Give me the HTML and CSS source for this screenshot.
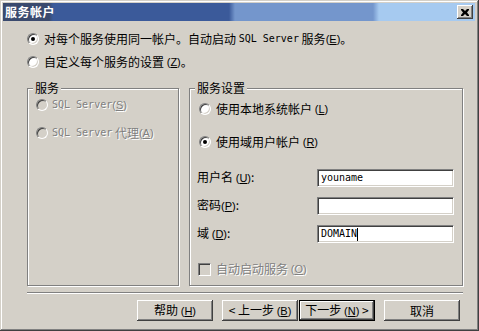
FILE: index.html
```html
<!DOCTYPE html>
<html lang="zh-CN">
<head>
  <meta charset="UTF-8">
  <title>服务帐户</title>
  <link rel="stylesheet" href="styles.css">
</head>
<body>
  <div class="window">
    <div class="titlebar">
      <span class="title">服务帐户</span>
      <span class="close">
        <svg width="8" height="7" viewBox="0 0 8 7"><path d="M0 0h2l2 2 2-2h2v1L6 3.5 8 6v1H6L4 5 2 7H0V6l2-2.5L0 1z" fill="#000"/></svg>
      </span>
    </div>
    <div class="content">
      <div class="opt first"><span class="radio checked"></span>对每个服务使用同一帐户。自动启动 <span class="lat">SQL Server</span> 服务<span class="key">(<u>E</u>)</span>。</div>
      <div class="opt second"><span class="radio"></span>自定义每个服务的设置 <span class="key">(<u>Z</u>)</span>。</div>

      <div class="groups">
        <!-- 服务 -->
        <div class="group services">
          <span class="legend">服务</span>
          <div class="opt disabled"><span class="radio off"></span><span class="lat">SQL Server</span><span class="key">(<u>S</u>)</span></div>
          <div class="opt disabled agent"><span class="radio off"></span><span class="lat">SQL Server</span> 代理<span class="key">(<u>A</u>)</span></div>
        </div>
        <!-- 服务设置 -->
        <div class="group settings">
          <span class="legend">服务设置</span>
          <div class="opt inner"><span class="radio"></span>使用本地系统帐户 <span class="key">(<u>L</u>)</span></div>
          <div class="opt inner domain"><span class="radio checked"></span>使用域用户帐户 <span class="key">(<u>R</u>)</span></div>
          <div class="fields">
            <div class="field"><span class="label">用户名 <span class="key">(<u>U</u>)</span>:</span><span class="input"><span class="lat">youname</span></span></div>
            <div class="field"><span class="label">密码<span class="key">(<u>P</u>)</span>:</span><span class="input"></span></div>
            <div class="field"><span class="label">域 <span class="key">(<u>D</u>)</span>:</span><span class="input"><span class="lat">DOMAIN</span><span class="caret"></span></span></div>
          </div>
          <div class="opt disabled check"><span class="checkbox"></span>自动启动服务 <span class="key">(<u>O</u>)</span></div>
        </div>
      </div>

      <div class="sep"></div>

      <div class="buttons">
        <button class="button">帮助 <span class="key">(<u>H</u>)</span></button>
        <button class="button back">&lt; 上一步 <span class="key">(<u>B</u>)</span></button>
        <button class="button default">下一步 <span class="key">(<u>N</u>)</span> &gt;</button>
        <button class="button cancel">取消</button>
      </div>
    </div>
  </div>
</body>
</html>
```

FILE: styles.css
```css
:root {
  --face: #d4d0c8;
  --shadow: #808080;
  --dark: #404040;
  --light: #fff;
}
* { box-sizing: border-box; }
body {
  margin: 0;
  background: var(--face);
  font-family: "Noto Sans CJK SC", "Noto Sans", sans-serif;
  font-size: 12px;
  line-height: 16px;
  color: #000;
}
u { text-decoration: underline; }
.lat {
  font-family: "DejaVu Sans Mono", monospace;
  font-size: 10px;
}
.key {
  font-family: "Liberation Sans", sans-serif;
  font-size: 11px;
  white-space: pre;
}
.window {
  width: 479px;
  height: 331px;
  background: var(--face);
  box-shadow: inset -1px -1px var(--dark), inset 1px 1px var(--face),
              inset -2px -2px var(--shadow), inset 2px 2px var(--light);
  padding-top: 3px;
}
.titlebar {
  height: 18px;
  margin: 0 4px 0 3px;
  display: flex;
  align-items: center;
  justify-content: space-between;
  padding: 0 2px 0 2px;
  background: linear-gradient(to right, #3a4a6e 0, #3a4a6e 46px, #3b5a9a 50px,
              #3b5a9a 226px, #7496cc 232px, #7496cc 370px, #a6caf0 376px);
}
.title {
  color: #fff;
  font-weight: bold;
  letter-spacing: 0.5px;
}
.close {
  width: 16px;
  height: 14px;
  display: flex;
  align-items: center;
  justify-content: center;
  background: var(--face);
  box-shadow: inset -1px -1px var(--dark), inset 1px 1px var(--light),
              inset -2px -2px var(--shadow);
}
.content {
  padding: 0 16px 0 27px;
}
.opt {
  display: flex;
  align-items: center;
  height: 16px;
  white-space: pre;
}
.opt .radio, .opt .checkbox { margin-right: 5px; }
.opt.first { margin-top: 10px; }
.opt.second { margin-top: 7px; }
.radio {
  width: 12px;
  height: 12px;
  flex: none;
  border-radius: 50%;
  background: #fff;
  border: 1px solid;
  border-color: var(--shadow) var(--light) var(--light) var(--shadow);
  box-shadow: inset 1px 1px var(--dark), inset -1px -1px var(--face);
  display: flex;
  align-items: center;
  justify-content: center;
}
.radio.checked::after {
  content: "";
  width: 4px;
  height: 4px;
  border-radius: 50%;
  background: #000;
}
.radio.off { background: var(--face); }
.disabled {
  color: var(--shadow);
  text-shadow: 1px 1px 0 var(--light);
}
.groups {
  display: flex;
  gap: 10px;
  margin-top: 18px;
}
.group {
  position: relative;
  height: 198px;
  border: 1px solid var(--shadow);
  box-shadow: 1px 1px 0 var(--light), inset 1px 1px 0 var(--light);
}
.legend {
  position: absolute;
  top: -9px;
  left: 5px;
  padding: 0 2px;
  background: var(--face);
}
.services {
  width: 152px;
  padding: 8px 0 0 8px;
}
.services .radio { margin-right: 4px; }
.services .agent { margin-top: 12px; }
.settings {
  width: 274px;
  padding: 12px 8px 0 7px;
}
.settings .inner { margin-left: 2px; }
.settings .domain { margin-top: 17px; }
.fields {
  display: flex;
  flex-direction: column;
  gap: 10px;
  margin-top: 19px;
}
.field {
  display: flex;
  align-items: flex-start;
}
.label {
  width: 120px;
  line-height: 16px;
  white-space: pre;
}
.input {
  width: 137px;
  height: 18px;
  display: flex;
  align-items: center;
  padding-left: 3px;
  background: #fff;
  border: 1px solid;
  border-color: var(--shadow) var(--light) var(--light) var(--shadow);
  box-shadow: inset 1px 1px var(--dark), inset -1px -1px var(--face);
}
.caret {
  width: 1px;
  height: 13px;
  background: #000;
}
.check {
  margin-top: 18px;
  margin-left: 1px;
}
.checkbox {
  width: 13px;
  height: 13px;
  flex: none;
  background: var(--face);
  border: 1px solid;
  border-color: var(--shadow) var(--light) var(--light) var(--shadow);
  box-shadow: inset 1px 1px var(--dark), inset -1px -1px var(--face);
}
.sep {
  margin-top: 6px;
  height: 2px;
  border-top: 1px solid var(--shadow);
  border-bottom: 1px solid var(--light);
}
.buttons {
  display: flex;
  justify-content: flex-end;
  margin-top: 6px;
  padding-right: 3px;
}
.button {
  width: 76px;
  height: 21px;
  padding: 0;
  border: none;
  font: inherit;
  color: #000;
  white-space: pre;
  background: var(--face);
  box-shadow: inset -1px -1px var(--dark), inset 1px 1px var(--light),
              inset -2px -2px var(--shadow);
}
.button.back { margin-left: 9px; }
.button.default {
  margin-left: 1px;
  border: 1px solid #000;
}
.button.cancel { margin-left: 9px; }
```
